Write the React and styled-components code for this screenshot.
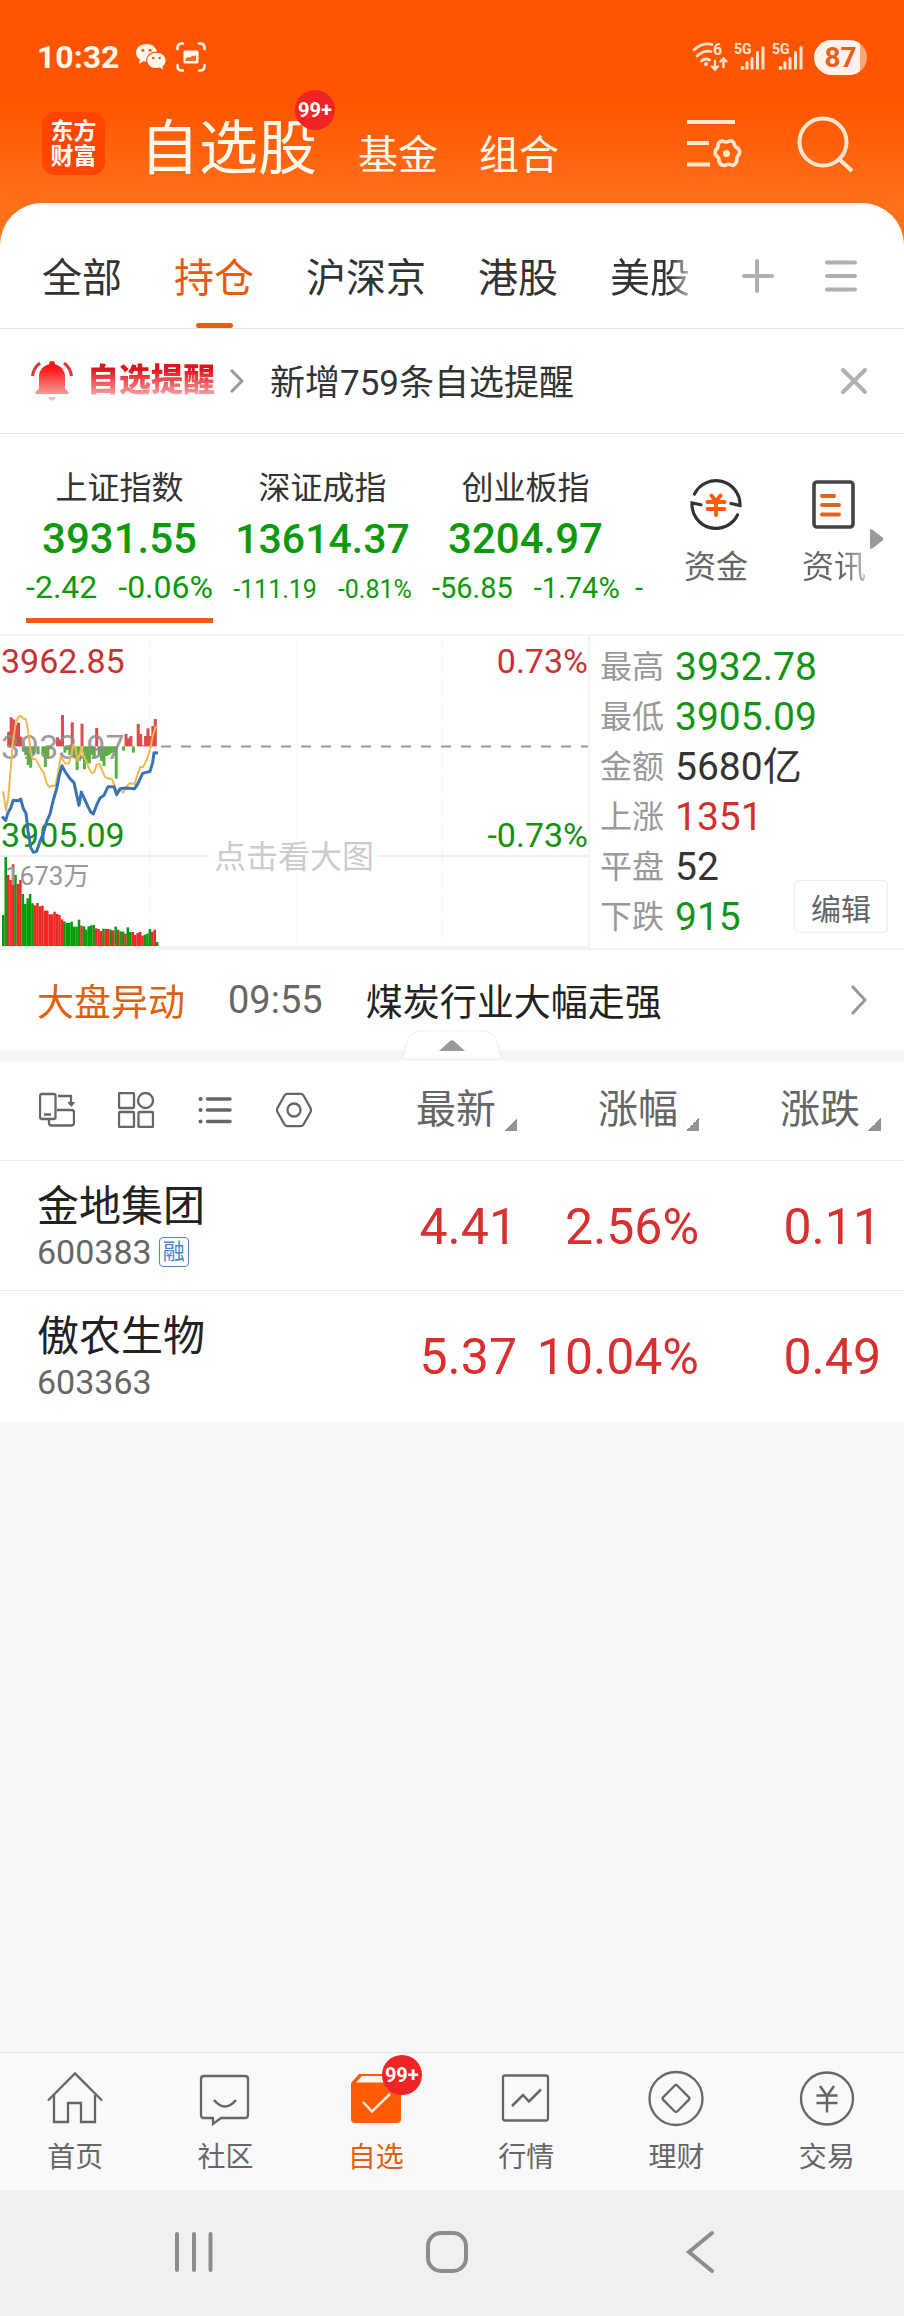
import React from 'react'
import styled, { createGlobalStyle } from 'styled-components';

const GlobalStyle = createGlobalStyle`
    * {
        box-sizing:border-box;
    }

    body {
        margin:0;
        background:#f7f8fa;
        color:#333;
        font-family:Roboto, "Noto Sans CJK SC", sans-serif;
    }

    button {
        border:none;
        padding:0;
        background:none;
        color:inherit;
        font:inherit;
        cursor:pointer;
    }

    a {
        color:inherit;
        text-decoration:none;
    }

    p, h1 {
        margin:0;
        font-weight:400;
    }

    svg {
        display:block;
    }
`;

const Page = styled.div`
    display:flex;
    flex-direction:column;
    min-height:100vh;
`;

const Header = styled.header`
    background:linear-gradient(#ff5500 50%, #ff701b);
    color:#fff8ec;
`;

const StatusBar = styled.div`
    display:flex;
    align-items:center;
    justify-content:space-between;
    height:78px;
    padding:36px 37px 0;
`;

const StatusGroup = styled.div`
    display:flex;
    align-items:center;
    gap:${({gap}) => gap}px;
`;

const Clock = styled.span`
    margin-right:7px;
    font-size:32px;
    font-weight:700;
`;

const Battery = styled.span`
    width:53px;
    height:35px;
    margin-left:4px;
    border-radius:18px;
    background:linear-gradient(90deg, #fff2ea 46px, #ffa673 46px);
    color:#e8601c;
    font-size:28px;
    font-weight:700;
    line-height:35px;
    text-align:center;
`;

const TitleRow = styled.div`
    display:flex;
    align-items:center;
    height:125px;
    padding:6px 49px 0 42px;
`;

const Logo = styled.div`
    width:63px;
    height:63px;
    padding-top:7px;
    border-radius:13px;
    background:#ff4500;
    color:#fff;
    font-size:23px;
    font-weight:700;
    line-height:25px;
    text-align:center;
`;

const Titles = styled.nav`
    display:flex;
    flex:1;
    align-items:baseline;
    gap:41px;
    padding:10px 0 0 35px;
    font-size:40px;
`;

const MainTitle = styled.h1`
    position:relative;
    font-size:59px;
    line-height:70px;
`;

const Badge = styled.span`
    position:absolute;
    top:${({top}) => top}px;
    right:${({right}) => right}px;
    width:40px;
    height:40px;
    border-radius:50%;
    background:#f02424;
    color:#fff;
    font-size:20px;
    font-weight:700;
    line-height:40px;
    text-align:center;
`;

const HeaderActions = styled.div`
    display:flex;
    align-items:center;
    gap:54px;
`;

const TabsShell = styled.div`
    background:#ff701b;
`;

const Tabs = styled.nav`
    display:flex;
    align-items:center;
    gap:52px;
    height:126px;
    padding:0 46px 0 42px;
    border-bottom:1px solid #e4e4e4;
    border-radius:42px 42px 0 0;
    background:#fff;
    font-size:40px;
`;

const Tab = styled.button`
    display:flex;
    flex-direction:column;
    align-items:center;
    justify-content:space-between;
    height:100%;
    padding-top:46px;
    line-height:60px;
    white-space:nowrap;
    color:${({active}) => active ? '#e85a10' : '#333'};

    &::after {
        content:"";
        width:37px;
        height:5px;
        border-radius:3px;
        background:${({active}) => active ? '#eb5b10' : 'transparent'};
    }

    ${({faded}) => faded && `
        background:linear-gradient(90deg, #333 75%, #bbb);
        background-clip:text;
        color:transparent;
    `}
`;

const TabTools = styled.div`
    display:flex;
    flex:1;
    justify-content:space-between;
    padding-top:20px;
`;

const Notice = styled.div`
    display:flex;
    align-items:center;
    height:105px;
    padding:0 36px 0 31px;
    border-bottom:1px solid #e4e4e4;
    background:#fff;
`;

const NoticeTag = styled.strong`
    margin:0 15px 0 14px;
    padding-bottom:2px;
    background:linear-gradient(#e0141c 25%, #ffaaaa 85%);
    background-clip:text;
    color:transparent;
    font-size:32px;
    font-weight:900;
    line-height:44px;
`;

const NoticeText = styled.a`
    flex:1;
    margin-left:26px;
    padding-bottom:4px;
    font-size:35px;
`;

const IndexBar = styled.section`
    position:relative;
    display:flex;
    height:200px;
    padding-right:11px;
    background:#fff;
`;

const IndexList = styled.div`
    display:flex;
    flex:1;
    gap:16px;
    overflow:hidden;
    padding:32px 0 0 26px;
`;

const IndexItem = styled.button`
    display:flex;
    flex:none;
    flex-direction:column;
    width:187px;
    height:157px;
    border-bottom:5px solid ${({active}) => active ? '#eb5b10' : 'transparent'};
    color:#0c990c;
    text-align:${({cut}) => cut ? 'left' : 'center'};
    white-space:nowrap;
`;

const IndexName = styled.span`
    width:100%;
    height:44px;
    color:#333;
    font-size:32px;
    line-height:44px;
`;

const IndexValue = styled.span`
    width:100%;
    height:57px;
    font-size:${({long}) => long ? 41 : 42}px;
    font-weight:500;
    line-height:58px;
`;

const IndexChange = styled.span`
    width:100%;
    font-size:32px;
    line-height:40px;
`;

const Delta = styled.span`
    font-size:${({size}) => size}px;

    & + & {
        margin-left:21px;
    }
`;

const Shortcut = styled.button`
    display:flex;
    flex-direction:column;
    align-items:center;
    gap:15px;
    width:118px;
    padding-top:44px;
    color:#666;
    font-size:32px;
    line-height:44px;
`;

const FadedLabel = styled.span`
    background:linear-gradient(90deg, #666 60%, #bbb);
    background-clip:text;
    color:transparent;
`;

const MoreArrow = styled.svg`
    position:absolute;
    top:95px;
    right:20px;
`;

const Market = styled.section`
    display:grid;
    grid-template-columns:590fr 314fr;
    border-top:2px solid #f4f4f4;
    border-bottom:2px solid #f4f4f4;
    background:#fff;
`;

const ChartBox = styled.div`
    border-right:2px solid #f4f4f4;
`;

const Stats = styled.div`
    display:flex;
    align-items:flex-end;
    justify-content:space-between;
    padding:6px 16px 6px 10px;
`;

const StatList = styled.dl`
    display:grid;
    grid-template-columns:auto auto;
    column-gap:11px;
    margin:0;
    line-height:50px;
`;

const StatLabel = styled.dt`
    color:#999;
    font-size:32px;
    white-space:nowrap;
`;

const StatValue = styled.dd`
    margin:0;
    color:${({color}) => color};
    font-size:39px;
    white-space:nowrap;
`;

const EditButton = styled.button`
    flex:none;
    width:94px;
    height:53px;
    margin-bottom:9px;
    margin-left:-60px;
    border:1px solid #ebebeb;
    border-radius:5px;
    background:#fff;
    color:#666;
    font-size:30px;
`;

const Movement = styled.div`
    position:relative;
    display:flex;
    align-items:center;
    gap:43px;
    height:111px;
    padding:0 37px;
    border-bottom:11px solid #f5f7fa;
    background:#fff;
    font-size:37px;
`;

const MovementTitle = styled.span`
    color:#e06010;
`;

const MovementTime = styled.time`
    color:#666;
    font-size:38px;
`;

const MovementText = styled.a`
    flex:1;
    color:#222;
`;

const Handle = styled.button`
    position:absolute;
    bottom:-10px;
    left:50%;
    transform:translateX(-50%);
`;

const Table = styled.table`
    width:100%;
    border-collapse:collapse;
    table-layout:fixed;
    background:#fff;
`;

const Row = styled.tr`
    height:${({height}) => height}px;
    border-bottom:1px solid ${({last}) => last ? '#fff' : '#ebebeb'};
`;

const HeadCell = styled.th`
    width:${({width}) => width ? width + 'px' : 'auto'};
    padding:0 ${({end}) => end ? 23 : 0}px 0 ${({start}) => start ? 39 : 0}px;
    font-weight:400;
`;

const ToolSet = styled.div`
    display:flex;
    gap:43px;
`;

const SortButton = styled.button`
    display:flex;
    align-items:center;
    gap:8px;
    margin-left:auto;
    color:#666;
    font-size:40px;
    line-height:60px;

    &::after {
        content:"";
        align-self:flex-end;
        width:13px;
        height:13px;
        margin-bottom:9px;
        background:linear-gradient(135deg, transparent 50%, #919196 50%);
    }
`;

const NameCell = styled.td`
    padding:4px 0 0 37px;
`;

const StockName = styled.p`
    color:#222;
    font-size:42px;
    line-height:50px;
`;

const StockCode = styled.p`
    display:flex;
    align-items:center;
    gap:7px;
    color:#666;
    font-size:34px;
    line-height:40px;
`;

const MarginTag = styled.span`
    width:30px;
    height:30px;
    border:1px solid #4a86c8;
    border-radius:4px;
    color:#4a86c8;
    font-size:22px;
    line-height:28px;
    text-align:center;
`;

const NumberCell = styled.td`
    padding:4px ${({end}) => end ? 23 : 0}px 0 0;
    color:#d92f2f;
    font-size:50px;
    text-align:right;
`;

const Spacer = styled.div`
    flex:1;
`;

const BottomNav = styled.nav`
    display:grid;
    grid-template-columns:repeat(6, 1fr);
    height:138px;
    padding-right:2px;
    border-top:1px solid #e2e2e4;
    background:#f9f9fb;
`;

const NavItem = styled.a`
    display:flex;
    flex-direction:column;
    align-items:center;
    gap:11px;
    padding-top:16px;
    color:${({active}) => active ? '#e06010' : '#666'};
    font-size:28px;
    line-height:40px;
`;

const NavIcon = styled.span`
    position:relative;
`;

const SystemNav = styled.div`
    display:flex;
    align-items:center;
    justify-content:center;
    gap:209px;
    height:126px;
    padding:0 10px 2px 0;
    background:#f0f0f2;
`;

const indexes = [
    {name:'上证指数', value:'3931.55', change:'-2.42', percent:'-0.06%', size:32, active:true},
    {name:'深证成指', value:'13614.37', change:'-111.19', percent:'-0.81%', size:25},
    {name:'创业板指', value:'3204.97', change:'-56.85', percent:'-1.74%', size:29},
    {name:'', value:'', change:'-', percent:'', size:29, cut:true},
]

const stats = [
    {label:'最高', value:'3932.78', color:'#149414'},
    {label:'最低', value:'3905.09', color:'#149414'},
    {label:'金额', value:'5680亿', color:'#333'},
    {label:'上涨', value:'1351', color:'#d03030'},
    {label:'平盘', value:'52', color:'#333'},
    {label:'下跌', value:'915', color:'#149414'},
]

const stocks = [
    {name:'金地集团', code:'600383', margin:true, price:'4.41', percent:'2.56%', change:'0.11'},
    {name:'傲农生物', code:'603363', margin:false, price:'5.37', percent:'10.04%', change:'0.49'},
]

// one entry per minute: top of the bar, r = up, g = down
const volumes = '855g 681g 735r 750r 703r 735g 762r 750r 792g 822g 805g 792g 820g 826r 819r 829r 827r 842r 842r 853r 853r 845r 852r 855r 868r 874g 879g 879g 875g 890g 890g 869g 887r 889g 899g 889g 886g 885g 895r 897r 903r 896g 897r 897r 899g 901r 890g 899r 904g 905g 911r 892g 906g 906r 915r 909r 906r 917r 914g 911g 897g 905r 899r 936g'
    .split(' ')

const momentum = {
    2:305, 3:262, 4:268, 5:285, 6:278, 7:320, 8:365, 9:375, 10:405, 11:413, 12:375, 14:373, 16:372, 17:411, 18:385, 19:358,
    22:322, 23:328, 24:255, 25:368, 26:360, 27:375, 28:277, 29:385, 30:420, 31:392, 32:281, 33:418, 34:400, 35:400, 36:375,
    37:385, 38:294, 39:375, 40:393, 41:408, 42:378, 43:375, 44:370, 45:366, 46:446, 49:362, 50:312, 51:325, 52:318, 53:368,
    55:282, 56:312, 57:346, 58:318, 59:295, 60:318, 61:288, 62:267,
}

const MinuteChart = () => (
    <svg width='100%' viewBox='0 0 588 312' fontSize='34'>
        <g stroke='#ececec' strokeDasharray='1 2'>
            <path d='M149.5 2v308M296.5 2v308M442.5 2v308'/>
        </g>
        <path d='M0 220h210M378 220h210' stroke='#f0f0f0' strokeWidth='2'/>
        <text x='294' y='232' fontSize='32' fill='#ccc' textAnchor='middle'>点击看大图</text>
        <path d='M161 110.500H588' stroke='#999' strokeWidth='2' strokeDasharray='10 10'/>
        <g transform='translate(0 -6) scale(.33333)'>
            {
                volumes.map((bar,i) => {
                    const top = parseInt(bar)
                    return <rect key={i} x={6 + i * 7.33} y={top} width='7.6' height={954 - top} fill={bar.endsWith('r') ? '#f12626' : '#089c08'}/>
                })
            }
            {
                Object.entries(momentum).map(([i,y]) => (
                    <rect key={i} x={7 + i * 7.33} y={Math.min(y,349)} width='9' height={Math.abs(y - 349)} fill={y < 349 ? '#dc4b4b' : '#5cb043'}/>
                ))
            }
        </g>
        <text x='1' y='37' fill='#c93232'>3962.85</text>
        <text x='588' y='37' fill='#c93232' textAnchor='end'>0.73%</text>
        <text x='1' y='123' fill='#8c8c8c' fillOpacity='.85'>3933.97</text>
        <text x='1' y='211' fill='#149014'>3905.09</text>
        <text x='588' y='211' fill='#149014' textAnchor='end'>-0.73%</text>
        <text x='5' y='249' fontSize='26' fill='#999'>1673万</text>
        <g transform='translate(0 -6) scale(.33333)' fill='none' strokeLinejoin='round'>
            <path d='M9 483L18 541L25 500L32 420L38 340L48 275L56 260L63 258L70 266L77 266L84 300L92 365L98 388L106 386L122 415L132 430L140 460L147 471L156 467L166 468L174 430L182 380L190 392L197 401L206 400L214 375L220 345L226 350L233 392L240 372L244 352L250 375L258 392L266 412L274 428L282 428L290 404L298 402L306 420L314 440L324 445L336 448L342 462L350 484L358 478L370 488L378 472L388 460L404 462L412 436L420 412L430 410L440 390L450 360L458 320L466 292L472 290' stroke='#f0b850' strokeWidth='6'/>
            <path d='M6 560L17 571L24 548L32 534L40 511L54 512L62 507L70 536L78 550L84 602L92 652L100 667L110 664L120 635L130 610L140 575L150 552L160 510L170 476L178 435L186 407L196 426L210 446L222 458L230 495L237 526L244 486L254 508L264 530L272 546L280 552L290 525L300 504L312 496L324 470L342 470L350 494L360 476L376 474L404 476L414 460L428 430L450 424L458 398L462 368L474 369' stroke='#3973b5' strokeWidth='9'/>
        </g>
        <path d='M0 311h588' stroke='#f4f4f4' strokeWidth='2'/>
    </svg>
)

const SignalIcon = () => (
    <svg width='32' height='38' viewBox='0 -4 32 38' fill='#ffe3cf' stroke='none'>
        <text x='0' y='12' fontSize='14' fontWeight='700'>5G</text>
        <circle cx='8.500' cy='26' r='2'/>
        <path d='M11.500 20.500a1.500 1.500 0 0 1 3 0v7h-3zM16.500 16.500a1.500 1.500 0 0 1 3 0v11h-3zM22 10.500a1.500 1.500 0 0 1 3 0v17h-3zM27.500 5.500a1.500 1.500 0 0 1 3 0v22h-3z'/>
    </svg>
)

const WifiIcon = () => (
    <svg width='36' height='38' viewBox='0 -4 36 38' fill='none' stroke='#ffe3cf' strokeWidth='2.800' strokeLinecap='round'>
        <path d='M2 8q8-8 18-5.500M5 14q7-6 14-4.500M9.500 19q4-3.500 8-1'/>
        <circle cx='14' cy='22' r='2' fill='#ffe3cf' stroke='none'/>
        <text x='21' y='13' fontSize='16' fontWeight='700' fill='#ffe3cf' stroke='none'>6</text>
        <path d='M23 19v8M20 24.500l3 3l3-3M31.500 25v-8M28.500 19.500l3-3l3 3' strokeWidth='2.400'/>
    </svg>
)

const WechatIcon = () => (
    <svg width='30' height='26' viewBox='0 0 30 26' fill='#fff8ec'>
        <path d='M10.500 0C4.700 0 0 3.900 0 8.800c0 2.800 1.500 5.100 3.900 6.800L3.100 20l4.200-2.800c1 .3 2 .4 3 .4C9.600 11.500 14.500 7.400 21 7.500C20 3 15.600 0 10.500 0z'/>
        <path d='M20.500 8.700c-5.200 0-9.200 3.400-9.200 7.700s4 7.700 9.200 7.700c1.200 0 2.300-.2 3.300-.5l3.400 1.900l-.8-3.100c2-1.400 3.200-3.600 3.200-6c0-4.300-4-7.700-9.100-7.700z'/>
        <g fill='#ff5a05'>
            <circle cx='6.800' cy='6.200' r='1.500'/>
            <circle cx='14' cy='6.200' r='1.500'/>
            <circle cx='17.300' cy='14' r='1.300'/>
            <circle cx='23.600' cy='14' r='1.300'/>
        </g>
    </svg>
)

const CaptureIcon = () => (
    <svg width='30' height='30' viewBox='0 0 30 30' fill='none' stroke='#fff8ec' strokeWidth='2.500' strokeLinecap='round'>
        <path d='M1.500 7V6q0-4.500 4.500-4.500h1M23 1.500h1q4.500 0 4.500 4.500v1M28.500 23v1q0 4.500-4.500 4.500h-1M7 28.500H6q-4.500 0-4.500-4.500v-1'/>
        <rect x='7.500' y='8.500' width='15' height='13' rx='1.500' fill='#fff8ec' stroke='none'/>
        <path d='M9.500 19v-2.500l3-1.500l2 .5l1.500-2l2 1l2-1.500v6z' fill='#ff6a1c' stroke='none'/>
    </svg>
)

const SettingsListIcon = () => (
    <svg width='56' height='50' viewBox='0 0 56 50' fill='none' stroke='#ffe6cf' strokeWidth='4'>
        <path d='M0 3h48M0 24h22M0 45.500h23'/>
        <path d='M36.500 21.500q3.500 2 7 0q3.500-.8 4.500 2.500q.5 3.500 4 5q2.500 2.500 1.200 5.500q-2.700 2.500-2.200 5.500q-.3 4.500-4 6q-4-2.500-8 0q-4.500 0-6-4q.5-3.500-2.500-5.500q-2.500-2.500-.8-6q2.800-2 2.300-5q.5-3.500 4.500-4z' transform='translate(-1 .5)' strokeWidth='3.600' strokeLinejoin='round'/>
        <circle cx='39.500' cy='34.500' r='3.500' fill='#ffe6cf' stroke='none'/>
    </svg>
)

const SearchIcon = () => (
    <svg width='58' height='58' viewBox='0 0 58 58' fill='none' stroke='#ffe6cf' strokeWidth='4'>
        <circle cx='26' cy='27' r='23.500'/>
        <path d='M42 44l13 12'/>
    </svg>
)

const BellIcon = () => (
    <svg width='42' height='40' viewBox='0 0 42 40'>
        <defs>
            <linearGradient id='bell' x1='0' y1='0' x2='0' y2='1'>
                <stop offset='.25' stopColor='#ff1a1a'/>
                <stop offset='1' stopColor='#f79a9a'/>
            </linearGradient>
        </defs>
        <path d='M21 0c2 0 3 1.200 3 3.200c6 1.500 10 6.300 10 12.300v12l3.500 3.500c.8 1 .4 2-1 2h-31c-1.400 0-1.800-1-1-2L8 27.500v-12c0-6 4-10.800 10-12.300C18 1.200 19 0 21 0z' fill='url(#bell)'/>
        <path d='M17 36h8q-1.500 3.500-4 3.500T17 36z' fill='#ffb5b5'/>
        <path d='M9 2Q2.500 7 1.500 15M33 2q6.500 5 7.500 13' fill='none' stroke='#e03535' strokeWidth='3'/>
    </svg>
)

const Chevron = ({width,height}) => (
    <svg width={width} height={height} viewBox={`0 0 ${width} ${height}`} fill='none' stroke='#999' strokeWidth='3'>
        <path d={`M1 1L${width - 2} ${height / 2}L1 ${height - 1}`}/>
    </svg>
)

const FundIcon = () => (
    <svg width='52' height='52' viewBox='0 0 52 52' fill='none' stroke='#333' strokeWidth='3.200' strokeLinecap='round'>
        <path d='M4.500 16A24 24 0 0 1 50 27.500l-9-2M47.500 37A24 24 0 0 1 2 25l9 1.800'/>
        <path d='M21.500 17.500l4.500 6l4.500-6M17.500 24h17M17.500 31h17M26 24v13' stroke='#ff5a0a' strokeWidth='3.800'/>
    </svg>
)

const NewsIcon = () => (
    <svg width='52' height='52' viewBox='0 0 52 52' fill='none' stroke='#444' strokeWidth='3.600'>
        <rect x='6' y='4' width='39' height='45' rx='3'/>
        <path d='M14 18h12M14 27h17M14 36.500h17' stroke='#e8601c' strokeWidth='4' strokeLinecap='round'/>
    </svg>
)

const tools = [
    {name:'横竖屏', icon:<><rect x='1' y='2' width='15.500' height='25' rx='2'/><path d='M5 22.500h7M10 28v3q0 2.500 2.500 2.500h20q2.500 0 2.500-2.500V20.500q0-2.500-2.500-2.500H18M19 4h13v9'/><path d='M29 10.500h6.500l-3.200 4z' fill='#666' strokeWidth='1'/></>},
    {name:'宫格', icon:<><rect x='1' y='1' width='15' height='15' rx='1'/><circle cx='27.500' cy='8.500' r='7.500'/><rect x='1' y='20' width='15' height='15' rx='1'/><rect x='20.500' y='20' width='14.500' height='15' rx='1'/></>},
    {name:'列表', icon:<><path d='M10.500 7h22.500M10.500 18h22.500M10.500 29.500h22.500' strokeWidth='3.500' strokeLinecap='round'/><path d='M3.500 7h.1M3.500 18h.1M3.500 29.500h.1' strokeWidth='4' strokeLinecap='round'/></>},
    {name:'设置', icon:<><path d='M11.500 1.800h13q2 0 3 1.700l7 12.500q1 2 0 4l-7 12.500q-1 1.700-3 1.700h-13q-2 0-3-1.700l-7-12.500q-1-2 0-4l7-12.500q1-1.700 3-1.700z'/><circle cx='18' cy='18' r='6.500'/></>},
]

const navItems = [
    {label:'首页', icon:<path d='M2 31.500L29 4.500l27 27M8 26v27h14V34h13v19h14V26'/>},
    {label:'社区', icon:<><path d='M8 7h41q3 0 3 3v36q0 3-3 3H25l-8 6v-6H8q-3 0-3-3V10q0-3 3-3z'/><path d='M18 31q11 13 22 0' strokeWidth='2.500'/></>},
    {label:'自选', active:true, icon:<><path d='M4 14l8-9h34l8 9v36q0 4-4 4H8q-4 0-4-4z' fill='#ff5a05' stroke='none'/><path d='M9 13.500l6-6.500h28l6 6.500z' fill='#fff5ec' stroke='none'/><path d='M16 33l9 9.500L43 25' stroke='#ffe9d8' strokeWidth='2.500'/></>},
    {label:'行情', icon:<><rect x='6' y='6.500' width='45' height='45' rx='2'/><path d='M15 37l11-11l6 6.500l12-12' strokeWidth='2.500'/></>},
    {label:'理财', icon:<><circle cx='29' cy='29.500' r='26.500'/><rect x='19' y='19.500' width='20' height='20' rx='2' transform='rotate(45 29 29.500)'/></>},
    {label:'交易', icon:<><circle cx='29' cy='29.500' r='26'/><path d='M22 17l7 10l7-10M18.500 26.500h21M18.500 34h21M29 27v16.500' strokeWidth='2.500'/></>},
]

const App = () => {
  return (
    <Page>
        <GlobalStyle/>
        <Header>
            <StatusBar>
                <StatusGroup gap={10}>
                    <Clock>10:32</Clock>
                    <WechatIcon/>
                    <CaptureIcon/>
                </StatusGroup>
                <StatusGroup gap={6}>
                    <WifiIcon/>
                    <SignalIcon/>
                    <SignalIcon/>
                    <Battery>87</Battery>
                </StatusGroup>
            </StatusBar>
            <TitleRow>
                <Logo>东方<br/>财富</Logo>
                <Titles>
                    <MainTitle>自选股<Badge top={-24} right={-18}>99+</Badge></MainTitle>
                    <a href='#fund'>基金</a>
                    <a href='#group'>组合</a>
                </Titles>
                <HeaderActions>
                    <button aria-label='管理'><SettingsListIcon/></button>
                    <button aria-label='搜索'><SearchIcon/></button>
                </HeaderActions>
            </TitleRow>
        </Header>

        <TabsShell>
            <Tabs>
                <Tab>全部</Tab>
                <Tab active>持仓</Tab>
                <Tab>沪深京</Tab>
                <Tab>港股</Tab>
                <Tab faded>美股</Tab>
                <TabTools>
                    <button aria-label='添加分组'>
                        <svg width='34' height='34' viewBox='0 0 34 34' stroke='#b0b0b0' strokeWidth='4' strokeLinecap='round'>
                            <path d='M15 2v30M2 17h28'/>
                        </svg>
                    </button>
                    <button aria-label='分组列表'>
                        <svg width='34' height='34' viewBox='0 0 34 34' stroke='#b0b0b0' strokeWidth='4' strokeLinecap='round'>
                            <path d='M3 3.500h28M3 17h28M3 30.500h28'/>
                        </svg>
                    </button>
                </TabTools>
            </Tabs>
        </TabsShell>

        <Notice>
            <BellIcon/>
            <NoticeTag>自选提醒</NoticeTag>
            <Chevron width={14} height={24}/>
            <NoticeText href='#notice'>新增759条自选提醒</NoticeText>
            <button aria-label='关闭'>
                <svg width='28' height='28' viewBox='0 0 28 28' stroke='#b0b0b0' strokeWidth='4' strokeLinecap='round'>
                    <path d='M3 3l22 22M25 3L3 25'/>
                </svg>
            </button>
        </Notice>

        <IndexBar>
            <IndexList>
                {
                    indexes.map((item,i) => (
                        <IndexItem key={i} active={item.active} cut={item.cut}>
                            <IndexName>{item.name}</IndexName>
                            <IndexValue long={item.value.length > 7 ? 1 : 0}>{item.value}</IndexValue>
                            <IndexChange>
                                <Delta size={item.size}>{item.change}</Delta>
                                {item.percent && <Delta size={item.size}>{item.percent}</Delta>}
                            </IndexChange>
                        </IndexItem>
                    ))
                }
            </IndexList>
            <Shortcut><FundIcon/>资金</Shortcut>
            <Shortcut><NewsIcon/><FadedLabel>资讯</FadedLabel></Shortcut>
            <MoreArrow width='14' height='20' viewBox='0 0 14 20' fill='#999'>
                <path d='M0 1.500Q0-.5 2.500.8L12.500 8.500Q14 10 12.500 11.500L2.500 19.200Q0 20.500 0 18.500z'/>
            </MoreArrow>
        </IndexBar>

        <Market>
            <ChartBox>
                <MinuteChart/>
            </ChartBox>
            <Stats>
                <StatList>
                    {
                        stats.map(({label,value,color}) => (
                            <React.Fragment key={label}>
                                <StatLabel>{label}</StatLabel>
                                <StatValue color={color}>{value}</StatValue>
                            </React.Fragment>
                        ))
                    }
                </StatList>
                <EditButton>编辑</EditButton>
            </Stats>
        </Market>

        <Movement>
            <MovementTitle>大盘异动</MovementTitle>
            <MovementTime>09:55</MovementTime>
            <MovementText href='#movement'>煤炭行业大幅走强</MovementText>
            <Chevron width={16} height={30}/>
            <Handle aria-label='收起'>
                <svg width='100' height='30' viewBox='0 0 100 30'>
                    <path d='M1 29L4 14Q7 1 20 1H80Q93 1 96 14L99 29z' fill='#fff' stroke='#efefef'/>
                    <path d='M37 21L48 11Q50 9.500 52 11L63 21z' fill='#999'/>
                </svg>
            </Handle>
        </Movement>

        <Table>
            <thead>
                <Row height={99}>
                    <HeadCell start>
                        <ToolSet>
                            {
                                tools.map(({name,icon}) => (
                                    <button key={name} aria-label={name}>
                                        <svg width='36' height='36' viewBox='0 0 36 36' fill='none' stroke='#666' strokeWidth='2.300'>{icon}</svg>
                                    </button>
                                ))
                            }
                        </ToolSet>
                    </HeadCell>
                    <HeadCell width={140}><SortButton>最新</SortButton></HeadCell>
                    <HeadCell width={182}><SortButton>涨幅</SortButton></HeadCell>
                    <HeadCell width={205} end><SortButton>涨跌</SortButton></HeadCell>
                </Row>
            </thead>
            <tbody>
                {
                    stocks.map((stock,i) => (
                        <Row key={stock.code} height={130} last={i === stocks.length - 1}>
                            <NameCell>
                                <StockName>{stock.name}</StockName>
                                <StockCode>{stock.code}{stock.margin && <MarginTag>融</MarginTag>}</StockCode>
                            </NameCell>
                            <NumberCell>{stock.price}</NumberCell>
                            <NumberCell>{stock.percent}</NumberCell>
                            <NumberCell end>{stock.change}</NumberCell>
                        </Row>
                    ))
                }
            </tbody>
        </Table>

        <Spacer/>

        <BottomNav>
            {
                navItems.map(({label,icon,active}) => (
                    <NavItem key={label} href={`#${label}`} active={active}>
                        <NavIcon>
                            <svg width='58' height='58' viewBox='0 0 58 58' fill='none' stroke='#666' strokeWidth='2.300'>{icon}</svg>
                            {active && <Badge top={-14} right={-17}>99+</Badge>}
                        </NavIcon>
                        {label}
                    </NavItem>
                ))
            }
        </BottomNav>

        <SystemNav>
            <button aria-label='最近任务'>
                <svg width='44' height='44' viewBox='0 0 44 44' stroke='#8c8c8c' strokeWidth='4' strokeLinecap='round'>
                    <path d='M5 4v36M22 4v36M38.500 4v36'/>
                </svg>
            </button>
            <button aria-label='主屏幕'>
                <svg width='44' height='44' viewBox='0 0 44 44' fill='none' stroke='#8c8c8c' strokeWidth='4'>
                    <rect x='3' y='3' width='38' height='38' rx='13'/>
                </svg>
            </button>
            <button aria-label='返回'>
                <svg width='44' height='44' viewBox='0 0 44 44' fill='none' stroke='#8c8c8c' strokeWidth='4' strokeLinecap='round'>
                    <path d='M34 3L11 22l23 19'/>
                </svg>
            </button>
        </SystemNav>
    </Page>
  )
}

export default App
